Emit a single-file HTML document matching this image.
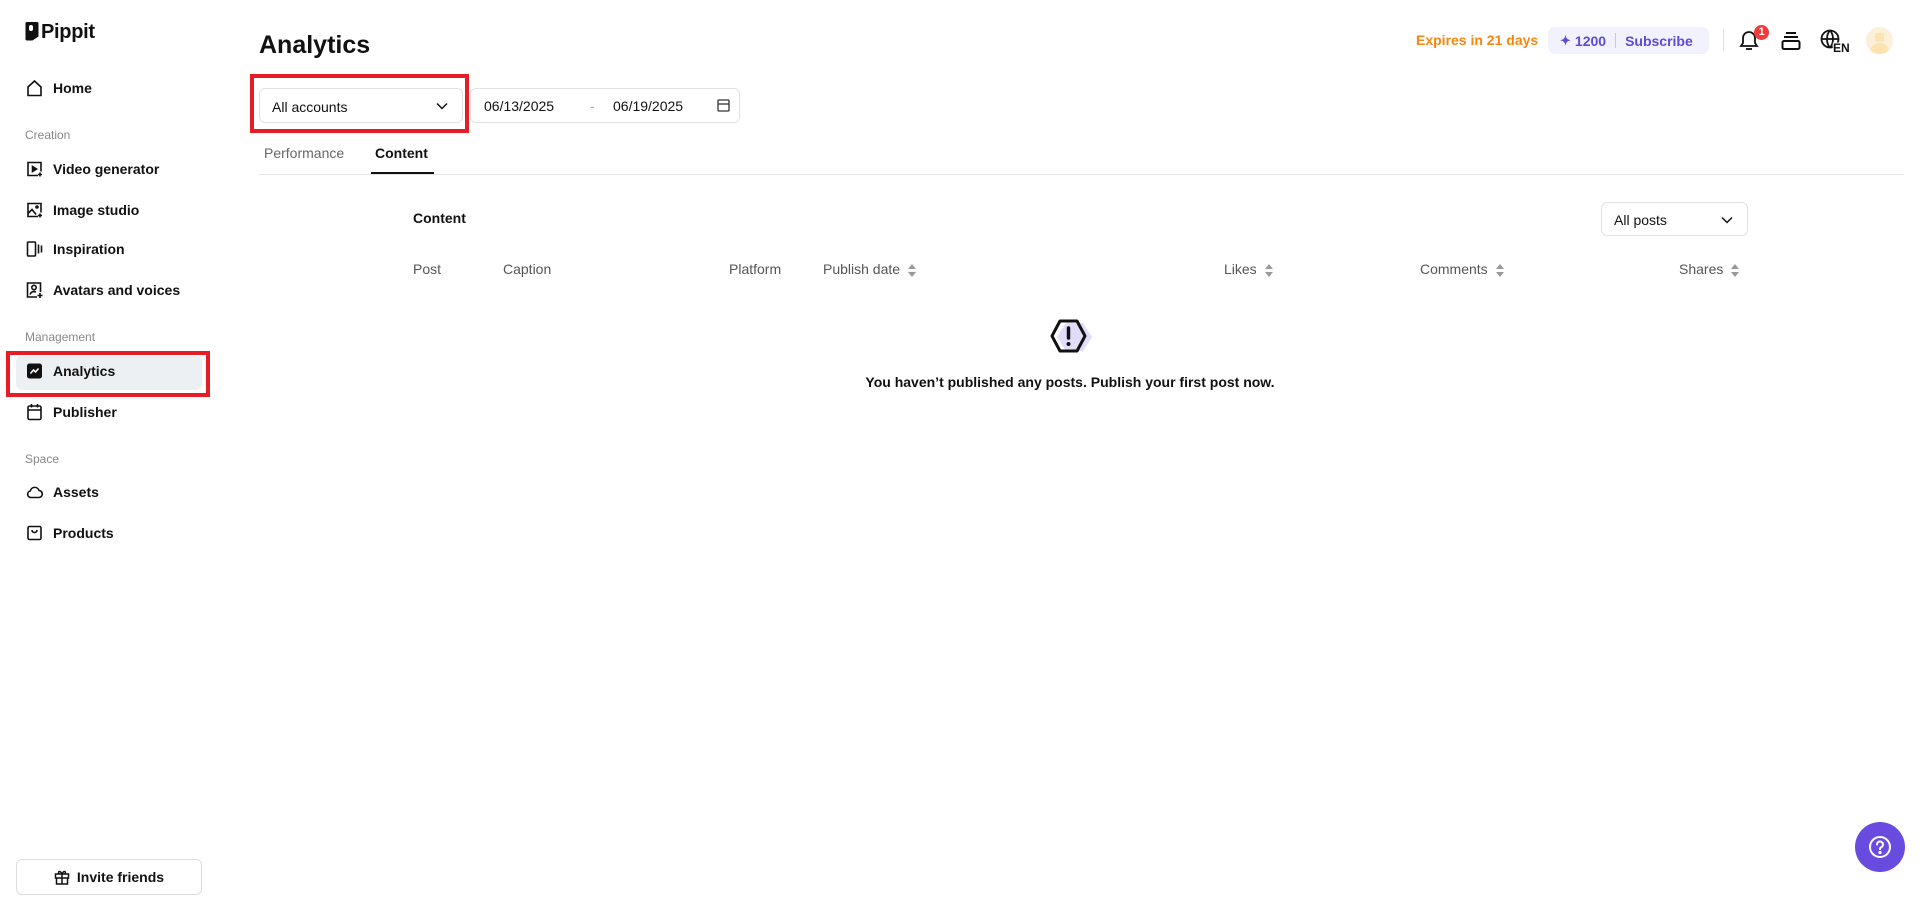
<!DOCTYPE html>
<html><head><meta charset="utf-8"><style>
*{box-sizing:border-box;margin:0;padding:0}
body{width:1920px;height:899px;background:#fff;font-family:"Liberation Sans",Arial,sans-serif;color:#111;position:relative;overflow:hidden}
.a{position:absolute}
.nav{position:absolute;left:53px;font-size:14px;font-weight:bold;color:#111;transform:translateY(-50%)}
.ic{position:absolute;left:26px;transform:translateY(-50%)}
.sec{position:absolute;left:25px;font-size:12px;color:#888;transform:translateY(-50%)}
.th{position:absolute;top:269px;transform:translateY(-50%);font-size:14px;color:#555;white-space:nowrap}
.sort{display:inline-block;vertical-align:middle;margin-left:8px}
</style></head><body>
<svg class="a" style="left:25px;top:21px" width="14" height="20" viewBox="0 0 14 20"><path d="M2 1h10a1.5 1.5 0 0 1 1.5 1.5v13l-6 4H2A1.5 1.5 0 0 1 .5 18V2.5A1.5 1.5 0 0 1 2 1z" fill="#111"/><rect x="4" y="4" width="4" height="6" rx="2" fill="#fff"/></svg>
<div class="a" style="left:41px;top:21px;font-size:20px;font-weight:bold;letter-spacing:-0.3px">Pippit</div>

<svg class="ic" style="top:88px" width="17" height="17" viewBox="0 0 17 17" fill="none" stroke="#111" stroke-width="1.6"><path d="M2 7.5L8.5 1.5 15 7.5V16H2z"/></svg>
<div class="nav" style="top:88px">Home</div>
<div class="sec" style="top:135px">Creation</div>
<svg class="ic" style="top:169px" width="17" height="17" viewBox="0 0 17 17" fill="none" stroke="#111" stroke-width="1.6"><path d="M12 15H2V2h13v9"/><path d="M6.5 6v5l4-2.5z" fill="#111"/><path d="M14 12v4M12 14h4"/></svg>
<div class="nav" style="top:169px">Video generator</div>
<svg class="ic" style="top:210px" width="17" height="17" viewBox="0 0 17 17" fill="none" stroke="#111" stroke-width="1.6"><path d="M12 15H2V2h13v9"/><path d="M2 12l4-4 4 5"/><circle cx="11" cy="5.5" r="1"/><path d="M14 12v4M12 14h4"/></svg>
<div class="nav" style="top:210px">Image studio</div>
<svg class="ic" style="top:249px" width="17" height="17" viewBox="0 0 17 17" fill="none" stroke="#111" stroke-width="1.6"><rect x="1.5" y="1.5" width="8" height="14" rx="1"/><path d="M12.5 4v9M15.5 5v7"/></svg>
<div class="nav" style="top:249px">Inspiration</div>
<svg class="ic" style="top:290px" width="17" height="17" viewBox="0 0 17 17" fill="none" stroke="#111" stroke-width="1.6"><path d="M11 15.5H1.5V1.5h13v9"/><circle cx="8" cy="6" r="2.2"/><path d="M4 13c1-2.5 3-3.5 6-2.5"/><path d="M14 11.5v5M11.5 14h5"/></svg>
<div class="nav" style="top:290px">Avatars and voices</div>
<div class="sec" style="top:337px">Management</div>
<div class="a" style="left:16px;top:356px;width:186px;height:34px;background:#edf0f3;border-radius:6px"></div>
<div class="a" style="left:6px;top:351px;width:204px;height:46px;border:4px solid #e81c24"></div>
<svg class="ic" style="top:371px" width="17" height="17" viewBox="0 0 17 17"><rect x="1" y="1" width="15" height="15" rx="2.5" fill="#111"/><path d="M4.5 11l3-3.5 2 2 3-3.5" stroke="#fff" stroke-width="1.5" fill="none"/></svg>
<div class="nav" style="top:371px">Analytics</div>
<svg class="ic" style="top:412px" width="17" height="17" viewBox="0 0 17 17" fill="none" stroke="#111" stroke-width="1.6"><rect x="2" y="2.5" width="13" height="13.5" rx="1.5"/><path d="M2 6.5h13M5.5 0.5v3.5M11.5 0.5v3.5"/></svg>
<div class="nav" style="top:412px">Publisher</div>
<div class="sec" style="top:459px">Space</div>
<svg class="ic" style="top:492px" width="17" height="17" viewBox="0 0 17 17" fill="none" stroke="#111" stroke-width="1.6"><path d="M4.5 14h8a3.5 3.5 0 0 0 .5-7A4.5 4.5 0 0 0 4.3 7.5 3.3 3.3 0 0 0 4.5 14z"/></svg>
<div class="nav" style="top:492px">Assets</div>
<svg class="ic" style="top:533px" width="17" height="17" viewBox="0 0 17 17" fill="none" stroke="#111" stroke-width="1.6"><rect x="2" y="2" width="13" height="13" rx="1.5"/><path d="M6 5.5a2.5 2.5 0 0 0 5 0"/></svg>
<div class="nav" style="top:533px">Products</div>
<div class="a" style="left:16px;top:859px;width:186px;height:36px;border:1px solid #ddd;border-radius:6px;display:flex;align-items:center;justify-content:center;font-size:14px;font-weight:bold">
<svg width="16" height="16" viewBox="0 0 16 16" fill="none" stroke="#111" stroke-width="1.5" style="margin-right:7px"><rect x="1.5" y="5" width="13" height="4"/><path d="M2.5 9v6h11V9M8 5v10M8 5C6 1 3.5 2.5 5 5M8 5c2-4 4.5-2.5 3 0"/></svg>Invite friends</div>

<div class="a" style="left:259px;top:31px;font-size:25px;font-weight:bold">Analytics</div>
<div class="a" style="left:1416px;top:32px;font-size:14px;font-weight:bold;color:#f7860f;white-space:nowrap">Expires in 21 days</div>
<div class="a" style="left:1548px;top:27px;width:161px;height:27px;background:#f2f1fe;border-radius:7px;color:#5b4bdb;font-weight:bold;font-size:14px;display:flex;align-items:center;padding-left:12px;white-space:nowrap">
<span style="font-size:13px;margin-right:4px">✦</span>1200<span style="width:1px;height:15px;background:#c8c3f3;margin:0 9px"></span>Subscribe</div>
<div class="a" style="left:1723px;top:29px;width:1px;height:22px;background:#e3e3e3"></div>
<svg class="a" style="left:1738px;top:28px" width="22" height="24" viewBox="0 0 22 24" fill="none" stroke="#111" stroke-width="1.8"><path d="M3 18h16l-2-3V10a6 6 0 0 0-12 0v5z"/><path d="M8 21h6"/></svg>
<div class="a" style="left:1754px;top:25px;width:15px;height:15px;border-radius:50%;background:#f23b3b;color:#fff;font-size:11px;font-weight:bold;text-align:center;line-height:15px">1</div>
<svg class="a" style="left:1781px;top:31px" width="20" height="20" viewBox="0 0 20 20" fill="none" stroke="#111" stroke-width="2"><path d="M5 2h10M3 6h14"/><rect x="1.5" y="10" width="17" height="8" rx="1.5"/></svg>
<svg class="a" style="left:1820px;top:29px" width="30" height="24" viewBox="0 0 30 24" fill="none" stroke="#111" stroke-width="1.8"><circle cx="10" cy="10" r="8.5"/><path d="M1.5 10h17M10 1.5c-4 4-4 13 0 17M10 1.5c4 4 4 13 0 17"/><text x="13" y="23" font-family="Liberation Sans,Arial" font-size="12" font-weight="bold" fill="#111" stroke="#fff" stroke-width="2" paint-order="stroke">EN</text></svg>
<div class="a" style="left:1866px;top:27px;width:27px;height:27px;border-radius:50%;background:#fdf0d8;overflow:hidden"><div style="position:absolute;left:9px;top:6px;width:9px;height:9px;background:#fde3b0;border-radius:2px"></div><div style="position:absolute;left:4px;top:16px;width:19px;height:12px;background:#fde3b0;border-radius:9px 9px 0 0"></div></div>

<div class="a" style="left:250px;top:74px;width:219px;height:59px;border:4px solid #e81c24"></div>
<div class="a" style="left:259px;top:88px;width:204px;height:35px;border:1px solid #e2e2e2;border-radius:6px;font-size:14px;padding:10px 12px">All accounts
<svg style="position:absolute;right:14px;top:13px" width="12" height="8" viewBox="0 0 12 8" fill="none" stroke="#111" stroke-width="1.5"><path d="M1 1.5l5 5 5-5"/></svg></div>
<div class="a" style="left:470px;top:88px;width:270px;height:35px;border:1px solid #e2e2e2;border-radius:6px;font-size:14px">
<span class="a" style="left:13px;top:9px">06/13/2025</span><span class="a" style="left:119px;top:9px;color:#aaa">-</span><span class="a" style="left:142px;top:9px">06/19/2025</span>
<svg class="a" style="left:246px;top:10px" width="13" height="13" viewBox="0 0 13 13" fill="none" stroke="#333" stroke-width="1.3"><rect x="1" y="1" width="11" height="11" rx="1"/><path d="M1 5h11"/></svg></div>
<div class="a" style="left:264px;top:145px;font-size:14px;color:#666">Performance</div>
<div class="a" style="left:375px;top:145px;font-size:14px;font-weight:bold">Content</div>
<div class="a" style="left:259px;top:174px;width:1645px;height:1px;background:#e3e3e3"></div>
<div class="a" style="left:371px;top:172px;width:63px;height:2px;background:#111"></div>

<div class="a" style="left:413px;top:210px;font-size:14px;font-weight:bold">Content</div>
<div class="a" style="left:1601px;top:202px;width:147px;height:34px;border:1px solid #e2e2e2;border-radius:6px;font-size:14px;padding:9px 12px">All posts
<svg style="position:absolute;right:14px;top:13px" width="12" height="8" viewBox="0 0 12 8" fill="none" stroke="#111" stroke-width="1.5"><path d="M1 1.5l5 5 5-5"/></svg></div>
<div class="th" style="left:413px">Post</div>
<div class="th" style="left:503px">Caption</div>
<div class="th" style="left:729px">Platform</div>
<div class="th" style="left:823px">Publish date<svg class="sort" width="8" height="13" viewBox="0 0 8 13" fill="#999"><path d="M4 0l4 5H0zM4 13L0 8h8z"/></svg></div>
<div class="th" style="left:1224px">Likes<svg class="sort" width="8" height="13" viewBox="0 0 8 13" fill="#999"><path d="M4 0l4 5H0zM4 13L0 8h8z"/></svg></div>
<div class="th" style="left:1420px">Comments<svg class="sort" width="8" height="13" viewBox="0 0 8 13" fill="#999"><path d="M4 0l4 5H0zM4 13L0 8h8z"/></svg></div>
<div class="th" style="left:1679px">Shares<svg class="sort" width="8" height="13" viewBox="0 0 8 13" fill="#999"><path d="M4 0l4 5H0zM4 13L0 8h8z"/></svg></div>

<svg class="a" style="left:1049px;top:318px" width="44" height="36" viewBox="0 0 44 36"><path d="M13 4h17l9 14-9 14H13L4 18z" fill="#e2dcfb" transform="translate(4,1)"/><path d="M11 3h17l8 15-8 15H11L3 18z" fill="none" stroke="#111" stroke-width="3" stroke-linejoin="round"/><path d="M19.5 10v10" stroke="#111" stroke-width="3.5" stroke-linecap="round"/><circle cx="19.5" cy="26" r="2" fill="#111"/></svg>
<div class="a" style="left:770px;top:374px;width:600px;text-align:center;font-size:14px;font-weight:bold;white-space:nowrap">You haven’t published any posts. Publish your first post now.</div>

<div class="a" style="left:1855px;top:822px;width:50px;height:50px;border-radius:50%;background:#6a4be0"></div>
<svg class="a" style="left:1867px;top:834px" width="26" height="26" viewBox="0 0 26 26" fill="none" stroke="#fff" stroke-width="2"><circle cx="13" cy="13" r="10"/><path d="M10 10.5a3 3 0 1 1 4 2.8c-.8.4-1 1-1 2" stroke-linecap="round"/><circle cx="13" cy="18.5" r="0.6" fill="#fff"/></svg>
</body></html>
